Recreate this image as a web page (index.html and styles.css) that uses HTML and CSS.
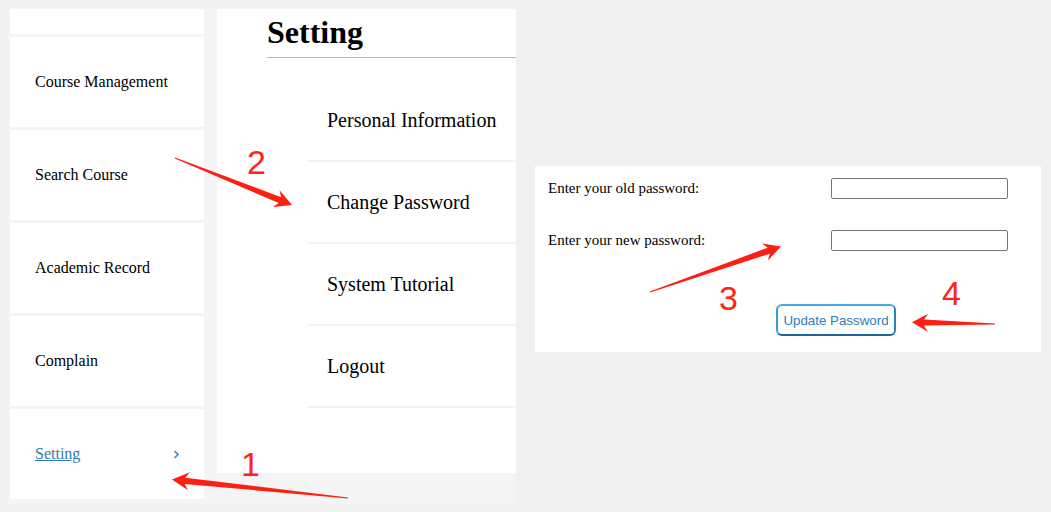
FILE: index.html
```html
<!DOCTYPE html>
<html lang="en">
<head>
<meta charset="utf-8">
<title>Setting</title>
<link rel="stylesheet" href="styles.css">
</head>
<body>
<div class="page">
  <div class="app">
    <nav class="sidebar">
      <div class="side-item side-blank"></div>
      <div class="side-item">Course Management</div>
      <div class="side-item">Search Course</div>
      <div class="side-item">Academic Record</div>
      <div class="side-item">Complain</div>
      <div class="side-item active">
        <a class="side-link" href="#">Setting</a>
        <svg class="chev" width="7" height="9" viewBox="0 0 7 9"><polyline points="1.5,1.2 5,4.5 1.5,7.8" fill="none" stroke="#3a8fcf" stroke-width="1.6"/></svg>
      </div>
    </nav>
    <main class="panel">
      <h1 class="panel-title">Setting</h1>
      <ul class="menu">
        <li class="menu-item">Personal Information</li>
        <li class="menu-item">Change Password</li>
        <li class="menu-item">System Tutorial</li>
        <li class="menu-item">Logout</li>
      </ul>
    </main>
  </div>
  <section class="pw-card">
    <div class="pw-grid">
      <label class="pw-label" for="oldpw">Enter your old password:</label>
      <input class="pw-input" id="oldpw" type="password">
      <label class="pw-label" for="newpw">Enter your new password:</label>
      <input class="pw-input" id="newpw" type="password">
    </div>
    <button class="pw-button" type="button">Update Password</button>
  </section>
</div>

<div class="annotations">
  <svg class="arrows" width="1051" height="512" viewBox="0 0 1051 512">
    <polygon fill="#ff1e12" points="348.05,497.5 185.26,477.68 189.85,472.33 172,479.5 187.97,490.23 184.60,484.04 347.95,498.5"/>
    <polygon fill="#ff1e12" points="174.81,158.46 278.75,203.12 272.87,207.01 292,205 279.58,190.31 281.13,197.18 175.19,157.54"/>
    <polygon fill="#ff1e12" points="650.16,292.47 769.75,253.76 767.87,260.56 781,246.5 761.99,243.54 767.67,247.72 649.84,291.53"/>
    <polygon fill="#ff1e12" points="995.01,323.5 924.06,319.55 928.18,313.63 912,322.3 927.81,331.63 923.94,325.55 994.99,324.5"/>
  </svg>
  <span class="step step-1">1</span>
  <span class="step step-2">2</span>
  <span class="step step-3">3</span>
  <span class="step step-4">4</span>
</div>
</body>
</html>
```

FILE: styles.css
```css
html, body {
  margin: 0;
  padding: 0;
}

body {
  background: #f0f0f0;
  font-family: "Liberation Serif", "Times New Roman", serif;
  color: #000;
  width: 1051px;
  height: 512px;
  overflow: hidden;
  position: relative;
}

.page {
  display: flex;
  align-items: flex-start;
  padding: 8px 0 0 8px;
}

.app {
  width: 508px;
  height: 497px;
  box-sizing: border-box;
  background: #f4f4f4;
  padding: 1px 0 0 2px;
  display: flex;
  gap: 13px;
}

.sidebar {
  width: 194px;
  display: flex;
  flex-direction: column;
  gap: 3px;
}

.side-item {
  height: 90px;
  background: #fff;
  display: flex;
  align-items: center;
  justify-content: space-between;
  padding: 0 25px;
  font-size: 16px;
}

.side-blank {
  height: 25px;
}

.side-link {
  color: #2c7db6;
  text-decoration: underline;
}

.chev {
  display: block;
  margin-right: -1px;
}

.panel {
  width: 299px;
  height: 464px;
  box-sizing: border-box;
  background: #fff;
  padding-left: 50px;
}

.panel-title {
  margin: 0;
  padding: 5px 0 6px;
  font-size: 32px;
  line-height: 37px;
  font-weight: bold;
  border-bottom: 1px solid #8ec3ec;
}

.menu {
  list-style: none;
  margin: 22px 0 0 40px;
  padding: 0;
}

.menu-item {
  height: 80px;
  border-bottom: 2px solid #f3f3f3;
  display: flex;
  align-items: center;
  padding-left: 20px;
  font-size: 20px;
}

.pw-card {
  margin: 158px 0 0 19px;
  width: 506px;
  height: 186px;
  box-sizing: border-box;
  background: #fff;
  padding: 12px 0 0 13px;
}

.pw-grid {
  display: grid;
  grid-template-columns: 283px 177px;
  row-gap: 31px;
  align-items: center;
}

.pw-label {
  font-size: 15px;
}

.pw-input {
  width: 177px;
  height: 21px;
  box-sizing: border-box;
  margin: 0;
  border: 1px solid #767676;
  border-radius: 2px;
  background: #fff;
}

.pw-button {
  display: block;
  margin: 53px 0 0 228px;
  width: 120px;
  height: 32px;
  box-sizing: border-box;
  padding: 0;
  background: #fff;
  border: 2px solid;
  border-color: #45a8ee #2a80c2 #1f679c #3a9ae0;
  border-radius: 6px;
  color: #2e7cc3;
  font-family: "Liberation Sans", Arial, sans-serif;
  font-size: 13.33px;
}

.annotations {
  position: absolute;
  top: 0;
  left: 0;
  width: 1051px;
  height: 512px;
  pointer-events: none;
}

.arrows {
  position: absolute;
  top: 0;
  left: 0;
}

.step {
  position: absolute;
  font-family: "Liberation Sans", Arial, sans-serif;
  font-size: 34px;
  line-height: 34px;
  color: #ff2418;
}

.step-1 { left: 241px; top: 447px; }
.step-2 { left: 247px; top: 145px; }
.step-3 { left: 719px; top: 281px; }
.step-4 { left: 942px; top: 276px; }
```
